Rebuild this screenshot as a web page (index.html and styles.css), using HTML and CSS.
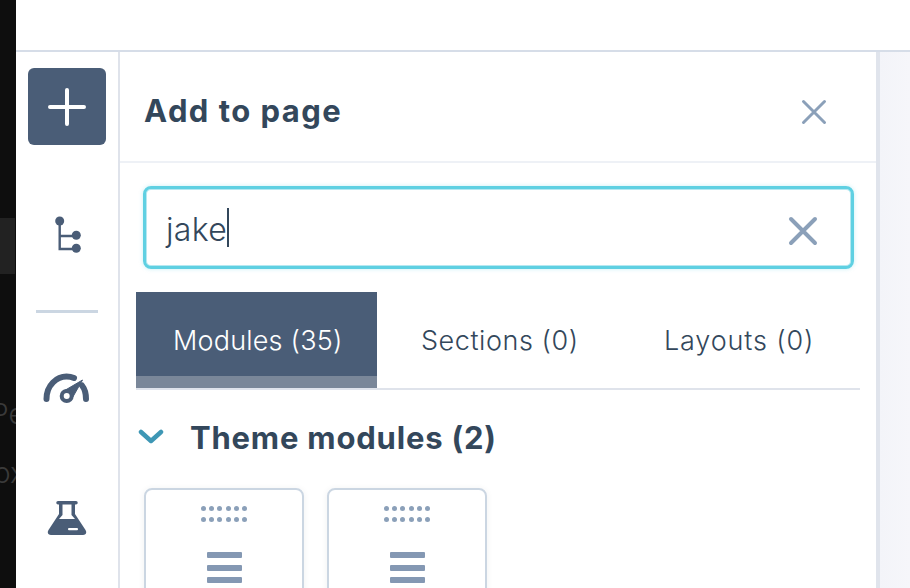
FILE: index.html
```html
<!DOCTYPE html>
<html>
<head>
    <title>Add to page</title>
    <link rel="stylesheet" href="styles.css">
</head>
<body>
    <div class="backdrop">
        <div class="backdrop-row"></div>
        <div class="backdrop-text first">Pe</div>
        <div class="backdrop-text">ox</div>
    </div>
    <div class="app">
        <div class="topbar"></div>
        <div class="workspace">
            <nav class="rail">
                <button class="add-btn" aria-label="Add">
                    <svg width="38" height="38" viewBox="0 0 38 38"><path d="M19 2v34M2 19h34" stroke="#fff" stroke-width="4" stroke-linecap="round"/></svg>
                </button>
                <svg class="tree-icon" width="30" height="38" viewBox="0 0 30 38">
                    <path d="M7.700 5v28h17M7.700 20h17" fill="none" stroke="#4a5d77" stroke-width="2.400"/>
                    <circle cx="7.700" cy="5" r="4.500" fill="#4a5d77"/>
                    <circle cx="24.300" cy="19.300" r="4.500" fill="#4a5d77"/>
                    <circle cx="24.300" cy="32.300" r="4.500" fill="#4a5d77"/>
                </svg>
                <div class="rail-divider"></div>
                <svg class="gauge-icon" width="50" height="32" viewBox="0 0 50 32">
                    <path d="M4.500 27C4.500 13 15 4.500 24.500 4.500c2.500 0 5 .4 7.500 1.500M40 13.500c2.800 3.500 4 8.500 4 13.500" fill="none" stroke="#4a5d77" stroke-width="6" stroke-linecap="round"/>
                    <path d="M40.500 8 29 28.200 20.400 19.800z" fill="#4a5d77" stroke="#4a5d77" stroke-linejoin="round"/>
                    <circle cx="24.700" cy="24" r="7" fill="#4a5d77"/>
                    <circle cx="24.700" cy="24" r="3" fill="#fff"/>
                </svg>
                <svg class="flask-icon" width="40" height="36" viewBox="0 0 40 36">
                    <path fill-rule="evenodd" d="M11 1h18a1.700 1.700 0 0 1 0 3.500h-1V14l10.500 16c1.800 2.800 0 5-2.500 5H4c-2.500 0-4.300-2.200-2.500-5L12 14V4.500h-1A1.700 1.700 0 0 1 11 1zM15.500 4.500v10.500L12 19h16l-3.500-4V4.500z" fill="#4a5d77"/>
                    <rect x="21" y="28" width="10" height="2.200" rx="1" fill="#fff"/>
                </svg>
            </nav>
            <main class="panel">
                <header class="panel-header">
                    <h1>Add to page</h1>
                    <svg class="panel-close" width="28" height="28" viewBox="0 0 28 28"><path d="M3.500 3.500l21 21M24.500 3.500l-21 21" stroke="#8ba0b9" stroke-width="3" stroke-linecap="round"/></svg>
                </header>
                <div class="panel-body">
                    <div class="search">
                        <span class="search-text">jake</span><span class="caret"></span>
                        <svg class="search-clear" width="30" height="30" viewBox="0 0 30 30"><path d="M3 3l24 24M27 3L3 27" stroke="#8ba0b9" stroke-width="4" stroke-linecap="round"/></svg>
                    </div>
                    <div class="tabs">
                        <div class="tab active">Modules (35)</div>
                        <div class="tab sections">Sections (0)</div>
                        <div class="tab layouts">Layouts (0)</div>
                    </div>
                    <div class="group-title">
                        <svg width="26" height="16" viewBox="0 0 26 16"><path d="M3 3l10 9 10-9" fill="none" stroke="#3e97b5" stroke-width="4.500" stroke-linecap="round" stroke-linejoin="round"/></svg>
                        <h2>Theme modules (2)</h2>
                    </div>
                    <div class="cards">
                        <div class="card">
                            <div class="dots"><i></i><i></i><i></i><i></i><i></i><i></i><i></i><i></i><i></i><i></i><i></i><i></i></div>
                            <div class="bars"><i></i><i></i><i></i></div>
                        </div>
                        <div class="card">
                            <div class="dots"><i></i><i></i><i></i><i></i><i></i><i></i><i></i><i></i><i></i><i></i><i></i><i></i></div>
                            <div class="bars"><i></i><i></i><i></i></div>
                        </div>
                    </div>
                </div>
            </main>
            <div class="canvas"></div>
        </div>
    </div>
</body>
</html>
```

FILE: styles.css
```css
html, body {
    margin: 0;
    height: 100%;
    overflow: hidden;
}
body {
    display: flex;
    font-family: Inter, Lato, sans-serif;
    color: #33475b;
    background: #fff;
}
.backdrop {
    width: 16px;
    flex-shrink: 0;
    background: #0e0e0e;
    overflow: hidden;
    padding-top: 218px;
    box-sizing: border-box;
}
.backdrop-row {
    width: 15px;
    height: 56px;
    background: #222;
}
.backdrop-text {
    margin-left: -6px;
    margin-top: 28px;
    height: 31px;
    line-height: 31px;
    font-size: 28px;
    font-weight: 300;
    color: #3a3a3a;
    white-space: nowrap;
}
.backdrop-text.first {
    margin-left: -9px;
    margin-top: 125px;
}
.app {
    flex: 1;
    display: flex;
    flex-direction: column;
    min-width: 0;
}
.topbar {
    height: 50px;
    flex-shrink: 0;
    background: #fff;
    border-bottom: 2px solid #d6dde8;
}
.workspace {
    flex: 1;
    display: flex;
    min-height: 0;
    overflow: hidden;
}
.rail {
    width: 104px;
    flex-shrink: 0;
    box-sizing: border-box;
    border-right: 2px solid #dfe3eb;
    display: flex;
    flex-direction: column;
    align-items: center;
    padding-top: 16px;
}
.add-btn {
    width: 78px;
    height: 77px;
    padding: 0;
    border: none;
    border-radius: 6px;
    background: #4a5d77;
    display: flex;
    align-items: center;
    justify-content: center;
    flex-shrink: 0;
}
.tree-icon {
    margin-top: 71px;
    flex-shrink: 0;
}
.rail-divider {
    width: 62px;
    height: 3px;
    margin-top: 56px;
    background: #cbd6e2;
    flex-shrink: 0;
}
.gauge-icon {
    margin-top: 59px;
    flex-shrink: 0;
}
.flask-icon {
    margin-top: 96px;
    flex-shrink: 0;
}
.panel {
    width: 760px;
    flex-shrink: 0;
    box-sizing: border-box;
    background: #fff;
    border-right: 4px solid #e0e4ec;
}
.panel-header {
    height: 111px;
    box-sizing: border-box;
    border-bottom: 2px solid #eef1f6;
    display: flex;
    align-items: center;
    justify-content: space-between;
    padding: 8px 48px 0 24px;
}
.panel-header h1 {
    margin: 0;
    font-size: 31px;
    font-weight: 700;
    letter-spacing: 1.45px;
}
.panel-close {
    margin-top: 2px;
}
.panel-body {
    padding: 23px 0 0 16px;
}
.search {
    width: 711px;
    height: 83px;
    margin-left: 7px;
    box-sizing: border-box;
    border: 3px solid #5fd0e2;
    border-radius: 8px;
    box-shadow: inset 0 0 0 1px #b5e8f1, 0 0 4px rgba(95, 208, 226, 0.35);
    display: flex;
    align-items: center;
    padding: 0 33px 0 20px;
    font-size: 32px;
    font-weight: 300;
    letter-spacing: 0.3px;
}
.search-text {
    color: #33475b;
    margin-top: 4px;
}
.caret {
    width: 2px;
    height: 39px;
    background: #33475b;
}
.search-clear {
    margin-left: auto;
    margin-top: 6px;
}
.tabs {
    width: 724px;
    height: 98px;
    margin-top: 23px;
    box-sizing: border-box;
    border-bottom: 2px solid #dfe3eb;
    display: flex;
    font-size: 27px;
    font-weight: 300;
    letter-spacing: 0.2px;
}
.tab {
    height: 96px;
    box-sizing: border-box;
    padding: 32px 37px 0;
    white-space: nowrap;
}
.tab.active {
    width: 241px;
    background: #4a5d77;
    border-bottom: 12px solid #7a8799;
    color: #fff;
}
.tab.sections {
    width: 230px;
    margin-left: 7px;
    letter-spacing: 0.55px;
}
.tab.layouts {
    margin-left: 13px;
    letter-spacing: 0.85px;
}
.group-title {
    display: flex;
    align-items: center;
    height: 40px;
    margin-top: 27px;
    margin-left: 2px;
    gap: 26px;
}
.group-title h2 {
    margin: 0;
    font-size: 31px;
    font-weight: 700;
    letter-spacing: 0.8px;
}
.cards {
    display: flex;
    gap: 23px;
    margin: 31px 0 0 8px;
}
.card {
    width: 160px;
    height: 140px;
    box-sizing: border-box;
    flex-shrink: 0;
    border: 2px solid #cbd6e2;
    border-radius: 8px;
    padding-top: 16px;
    box-shadow: 0 1px 6px rgba(45, 62, 80, 0.08);
}
.dots {
    width: 46px;
    margin: 0 auto;
    display: grid;
    grid-template-columns: repeat(6, 5px);
    justify-content: space-between;
    row-gap: 6px;
}
.dots i {
    height: 5px;
    border-radius: 50%;
    background: #8ba0b9;
}
.bars {
    width: 35px;
    margin: 30px auto 0;
    display: flex;
    flex-direction: column;
    gap: 6.500px;
}
.bars i {
    height: 6px;
    border-radius: 1px;
    background: #8498b3;
}
.canvas {
    flex: 1;
    background: linear-gradient(90deg, #f3f4f9, #f6f6fa);
}
```
